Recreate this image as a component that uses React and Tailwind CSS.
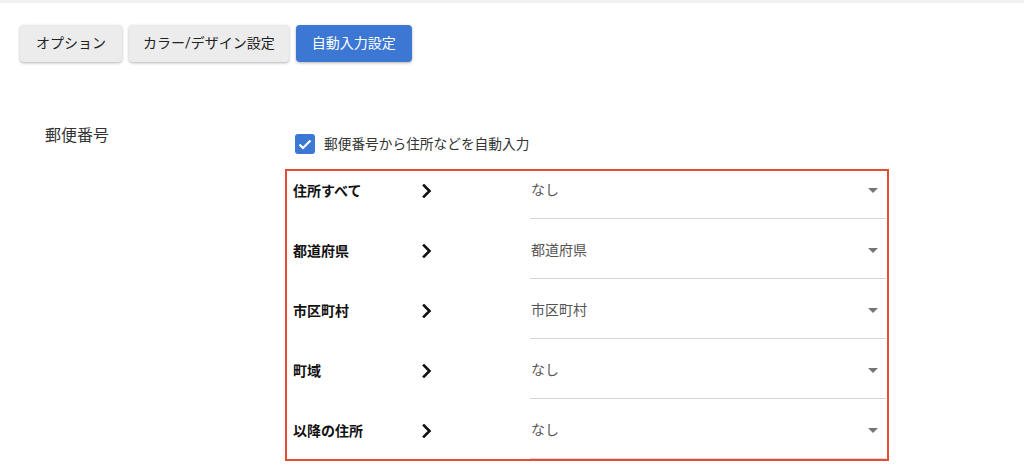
import React from 'react';

const ROWS = [
  { label: '住所すべて', value: 'なし' },
  { label: '都道府県', value: '都道府県' },
  { label: '市区町村', value: '市区町村' },
  { label: '町域', value: 'なし' },
  { label: '以降の住所', value: 'なし' },
];

const Chevron = () => (
  <svg width="10" height="14" viewBox="0 0 10 14" fill="none">
    <path d="M2 1.5 L7.5 7 L2 12.5" stroke="#111" strokeWidth="2.6" strokeLinecap="square" />
  </svg>
);

const Caret = () => (
  <svg width="10" height="5" viewBox="0 0 10 5">
    <path d="M0 0 L10 0 L5 5 Z" fill="#757575" />
  </svg>
);

const App = () => {
  return (
    <div className="min-h-screen bg-white font-['Roboto','Noto_Sans_CJK_JP',sans-serif] text-[#333]">
      <div className="h-[3px] bg-[#f1f1f1]"></div>

      <div className="flex gap-[7px] pl-[20px] pt-[22px]">
        <button className="h-[37px] px-4 rounded-[4px] bg-[#ececec] text-[14px] text-[#222] shadow-[0_1px_3px_rgba(0,0,0,0.3)]">
          オプション
        </button>
        <button className="h-[37px] px-[14px] rounded-[4px] bg-[#ececec] text-[14px] text-[#222] shadow-[0_1px_3px_rgba(0,0,0,0.3)]">
          カラー/デザイン設定
        </button>
        <button className="h-[37px] px-4 rounded-[4px] bg-[#3b77d3] text-[14px] text-white shadow-[0_1px_3px_rgba(0,0,0,0.3)]">
          自動入力設定
        </button>
      </div>

      <div className="flex mt-[62px]">
        <div className="w-[285px] pl-[45px] text-[16px] leading-[24px] text-[#333]">郵便番号</div>

        <div className="pt-[10px]">
          <label className="flex items-center gap-[9px] ml-[10px]">
            <span className="w-[20px] h-[20px] rounded-[3px] bg-[#3b77d3] flex items-center justify-center">
              <svg width="14" height="11" viewBox="0 0 14 11" fill="none">
                <path d="M1.5 5.5 L5 9 L12.5 1.5" stroke="white" strokeWidth="2.2" />
              </svg>
            </span>
            <span className="text-[13.7px] text-[#333]">郵便番号から住所などを自動入力</span>
          </label>

          <div className="mt-[14px] w-[604px] border-2 border-[#e64c33] pl-[6px] pr-[1px] flex flex-col gap-3">
            {ROWS.map((row) => (
              <div key={row.label} className="flex h-[48px]">
                <div className="w-[129px] flex items-center pb-[7px] text-[14px] font-bold text-[#111]">{row.label}</div>
                <div className="w-[108px] flex items-center pb-[7px]">
                  <Chevron />
                </div>
                <div className="flex-1 flex items-center justify-between pb-[7px] pl-[1px] pr-[8px] border-b border-[#d6d6d6]">
                  <span className="text-[14px] text-[#555]">{row.value}</span>
                  <Caret />
                </div>
              </div>
            ))}
          </div>
        </div>
      </div>
    </div>
  );
};

export default App;
